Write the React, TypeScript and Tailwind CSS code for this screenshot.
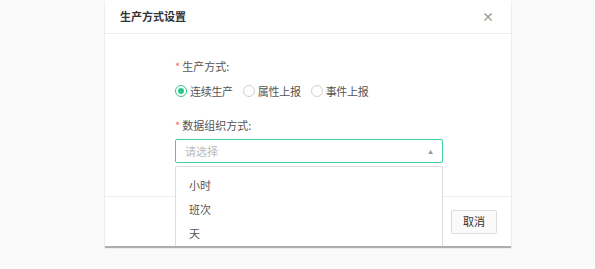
import React from "react";

const font = { fontFamily: '"Noto Sans CJK SC", "Noto Sans", sans-serif' };

const Radio = ({ label, checked }: { label: string; checked?: boolean }) => (
	<label className="mr-[10px] flex items-center">
		<span
			className={`flex h-[12px] w-[12px] items-center justify-center rounded-full border ${
				checked ? "border-[#2fc58a]" : "border-[#d0d0d0]"
			}`}
		>
			{checked && <span className="h-[6px] w-[6px] rounded-full bg-[#2fc58a]" />}
		</span>
		<span className="ml-[3px] text-[11px] leading-[16px] tracking-[-0.3px] text-[#555]">{label}</span>
	</label>
);

export default function App() {
	const options = ["小时", "班次", "天"];

	return (
		<div className="relative h-[269px] w-[595px] overflow-hidden bg-[#fafafa]" style={font}>
			{/* Modal */}
			<div className="ml-[105px] w-[406px] bg-white shadow-[0_2px_1px_rgba(0,0,0,0.3)]">
				<div className="flex h-[34px] items-center justify-between border-b border-[#eeeeee] pr-[17px] pl-[15px]">
					<h2 className="text-[11px] font-bold text-[#333]">生产方式设置</h2>
					<span className="text-[12px] leading-none font-bold text-[#999]">×</span>
				</div>

				<div className="pt-[24px] pb-[33px] pl-[70px]">
					<div className="flex items-center text-[11px] leading-[16px] text-[#555]">
						<span className="mr-[2px] text-[#f56c6c]">*</span>生产方式:
					</div>
					<div className="mt-[9px] flex items-center">
						<Radio label="连续生产" checked />
						<Radio label="属性上报" />
						<Radio label="事件上报" />
					</div>
					<div className="mt-[18px] flex items-center text-[11px] leading-[16px] text-[#555]">
						<span className="mr-[2px] text-[#f56c6c]">*</span>数据组织方式:
					</div>
					<div className="mt-[6px] flex h-[24px] w-[268px] items-center justify-between rounded-[2px] border border-[#3fcf97] px-[9px]">
						<span className="text-[11px] text-[#bbb]">请选择</span>
						<span className="text-[5px] leading-none text-[#999]">▲</span>
					</div>
				</div>

				<div className="flex h-[50px] items-center justify-end gap-[8px] border-t border-[#eeeeee] pr-[14px]">
					<button className="h-[24px] w-[46px] rounded-[2px] bg-[#2fc58a] text-[11px] text-white">确定</button>
					<button className="h-[24px] w-[46px] rounded-[2px] border border-[#dcdcdc] bg-[#fafafa] text-[11px] text-[#333]">
						取消
					</button>
				</div>
			</div>

			{/* Dropdown over the modal */}
			<div className="absolute top-[166px] left-[175px] h-[80px] w-[268px] rounded-t-[2px] border border-b-0 border-[#dddddd] bg-white pt-[6px]">
				{options.map((o) => (
					<div key={o} className="flex h-[24px] items-center pl-[13px] text-[11px] text-[#555]">
						{o}
					</div>
				))}
			</div>
		</div>
	);
}
